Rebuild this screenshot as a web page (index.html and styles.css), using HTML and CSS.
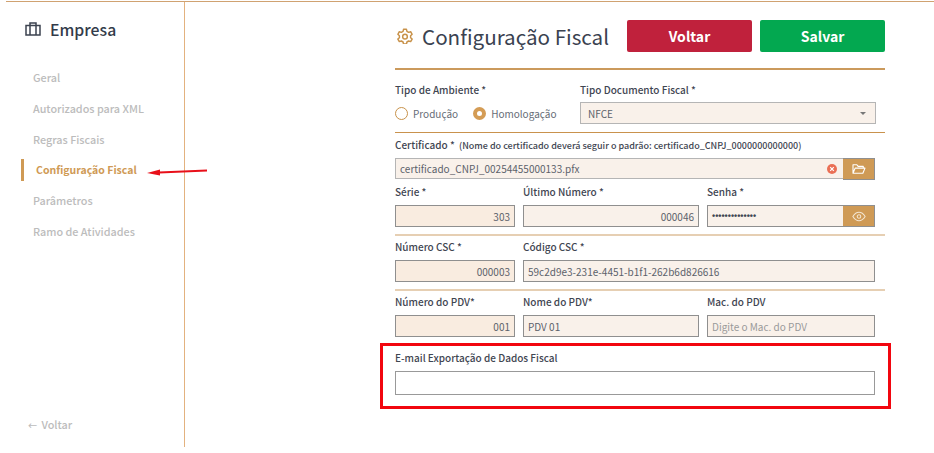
FILE: index.html
```html
<!DOCTYPE html>
<html lang="pt-BR">
<head>
<meta charset="UTF-8">
<title>Configuração Fiscal</title>
<link rel="stylesheet" href="styles.css">
</head>
<body>
<div class="page">
	<aside class="sidebar">
		<h2 class="side-title">
			<svg class="side-icon" viewBox="0 0 16 14" width="16" height="14">
				<path d="M1 3.500h14V13H1zM5 13V1h6v12" fill="none" stroke="#3d4350" stroke-width="1.500"/>
			</svg>
			Empresa
		</h2>
		<ul class="side-nav">
			<li>Geral</li>
			<li>Autorizados para XML</li>
			<li>Regras Fiscais</li>
			<li class="ac">Configuração Fiscal</li>
			<li>Parâmetros</li>
			<li>Ramo de Atividades</li>
		</ul>
		<a class="side-back"><span class="back-arrow">←</span> Voltar</a>
	</aside>

	<main class="main">
		<div class="head">
			<h1 class="title">
				<svg class="title-icon" viewBox="0 0 24 24" width="16" height="16">
					<path d="M9.800 2h4.400l.7 3 2.600 1.500 3-.9 2.200 3.800-2.300 2.100v3l2.300 2.100-2.200 3.800-3-.9-2.600 1.500-.7 3H9.800l-.7-3-2.600-1.500-3 .9L1.300 16.600l2.300-2.100v-3L1.300 9.400l2.200-3.800 3 .9L9.100 5z" fill="none" stroke="#c8924a" stroke-width="2.200" stroke-linejoin="round"/>
					<circle cx="12" cy="13" r="3.500" fill="none" stroke="#c8924a" stroke-width="2.200"/>
				</svg>
				Configuração Fiscal
			</h1>
			<a class="btn btn-red">Voltar</a>
			<a class="btn btn-green">Salvar</a>
		</div>
		<hr class="line">

		<div class="row row-env">
			<div>
				<label class="lbl">Tipo de Ambiente *</label>
				<div class="radios">
					<span class="radio"><i class="dot"></i>Produção</span>
					<span class="radio"><i class="dot on"></i>Homologação</span>
				</div>
			</div>
			<div>
				<label class="lbl">Tipo Documento Fiscal *</label>
				<div class="field select">NFCE<i class="caret"></i></div>
			</div>
		</div>
		<hr class="line thin">

		<div class="row-cert">
			<label class="lbl">Certificado * <small>(Nome do certificado deverá seguir o padrão: certificado_CNPJ_0000000000000)</small></label>
			<div class="group">
				<div class="field grow cert">certificado_CNPJ_00254455000133.pfx
					<svg class="clear" viewBox="0 0 10 10" width="10" height="10">
						<circle cx="5" cy="5" r="5" fill="#ea6f55"/>
						<path d="M3.200 3.200l3.600 3.600M6.800 3.200L3.200 6.800" stroke="#fff" stroke-width="1.200"/>
					</svg>
				</div>
				<a class="addon cert">
					<svg viewBox="0 0 16 14" width="14" height="12">
						<path d="M1 12V2h4.500l1.500 2h6v2M1 12l2.500-6H15l-2.500 6z" fill="none" stroke="#fff" stroke-width="1.300" stroke-linejoin="round"/>
					</svg>
				</a>
			</div>
		</div>
		<div class="row row-serie">
			<div>
				<label class="lbl">Série *</label>
				<div class="field num">303</div>
			</div>
			<div>
				<label class="lbl">Último Número *</label>
				<div class="field num">000046</div>
			</div>
			<div>
				<label class="lbl">Senha *</label>
				<div class="group">
					<div class="field grow pass">••••••••••••••</div>
					<a class="addon">
						<svg viewBox="0 0 16 12" width="14" height="11">
							<path d="M1 6c2-3.200 4.200-4.800 7-4.800S13 2.800 15 6c-2 3.200-4.200 4.800-7 4.800S3 9.200 1 6z" fill="none" stroke="#f3e6d3" stroke-width="1.200"/>
							<circle cx="8" cy="6" r="2" fill="none" stroke="#f3e6d3" stroke-width="1.200"/>
						</svg>
					</a>
				</div>
			</div>
		</div>
		<hr class="line soft">

		<div class="row row-csc">
			<div>
				<label class="lbl">Número CSC *</label>
				<div class="field num">000003</div>
			</div>
			<div>
				<label class="lbl">Código CSC *</label>
				<div class="field">59c2d9e3-231e-4451-b1f1-262b6d826616</div>
			</div>
		</div>
		<hr class="line soft">

		<div class="row row-serie">
			<div>
				<label class="lbl">Número do PDV*</label>
				<div class="field num">001</div>
			</div>
			<div>
				<label class="lbl">Nome do PDV*</label>
				<div class="field">PDV 01</div>
			</div>
			<div>
				<label class="lbl">Mac. do PDV</label>
				<div class="field holder">Digite o Mac. do PDV</div>
			</div>
		</div>

		<div class="mark-box">
			<label class="lbl">E-mail Exportação de Dados Fiscal</label>
			<div class="field blank"></div>
		</div>
	</main>

	<svg class="arrow" viewBox="0 0 64 10" width="64" height="10">
		<path d="M62 3.500L14 5.500" stroke="#e8101a" stroke-width="1.800"/>
		<path d="M2 6l13-3.500v6z" fill="#e8101a"/>
	</svg>
</div>
</body>
</html>
```

FILE: styles.css
```css
* {
	box-sizing: border-box;
}
body {
	margin: 0;
	background: #fff;
	color: #3f4652;
	font-family: "Noto Sans CJK SC", "Noto Sans", sans-serif;
	font-size: 10px;
}
.page {
	position: relative;
	display: flex;
	width: 928px;
	height: 453px;
	margin-left: 6px;
	padding-top: 1px;
	overflow: hidden;
}
.page::before {
	content: "";
	position: absolute;
	top: 1px;
	left: 0;
	right: 0;
	height: 1px;
	background: #d0a271;
}

/* sidebar */
.sidebar {
	display: flex;
	flex-direction: column;
	width: 179px;
	height: 446px;
	padding: 18px 0 15px 15px;
	border-right: 1px solid #e3b27f;
}
.side-title {
	display: flex;
	align-items: center;
	gap: 9px;
	height: 20px;
	margin: 0 0 23px 4px;
	font-size: 15.800px;
	font-weight: 500;
	color: #333b4a;
}
.side-nav {
	margin: 0;
	padding: 0;
	list-style: none;
}
.side-nav li {
	height: 30.800px;
	padding-left: 12px;
	line-height: 30px;
	font-size: 10.800px;
	font-weight: 500;
	color: #bcbcbc;
}
.side-nav li.ac {
	height: 22px;
	margin: 5px 0 4px;
	padding-left: 12px;
	line-height: 22px;
	border-left: 3px solid #cf9a55;
	font-size: 10.500px;
	font-weight: 700;
	color: #cf9a55;
}
.side-back {
	margin-top: auto;
	padding-left: 7px;
	font-size: 10.800px;
	font-weight: 500;
	color: #bcbcbc;
}
.back-arrow {
	margin-right: 2px;
	font-size: 9px;
}

/* main */
.main {
	width: 490px;
	margin-left: 210px;
}
.head {
	display: flex;
	align-items: center;
	gap: 8px;
	height: 32px;
	margin-top: 19px;
}
.title {
	display: flex;
	align-items: center;
	gap: 9px;
	flex: 1;
	margin: 0 0 0 2px;
	white-space: nowrap;
	font-size: 20.600px;
	font-weight: 400;
	color: #3a4250;
}
.btn {
	width: 125px;
	height: 32px;
	line-height: 32px;
	border-radius: 2px;
	text-align: center;
	font-size: 14px;
	font-weight: 700;
	color: #fff;
}
.btn-red {
	background: #c0213c;
}
.btn-green {
	background: #03a850;
}
.line {
	height: 2px;
	margin: 16px 0 0;
	border: 0;
	background: #cb9a5c;
}
.line.thin {
	height: 1px;
	margin: 8px 0 0;
	background: #c9924d;
}
.line.soft {
	margin: 7px 0 0;
	background: #e6cfb3;
}
.lbl {
	display: block;
	height: 14px;
	margin-bottom: 5px;
	line-height: 12px;
	font-size: 10px;
	font-weight: 500;
	color: #3f4652;
}
.lbl small {
	margin-left: 2px;
	font-size: 9px;
}
.row {
	display: grid;
	gap: 8px;
	margin-right: 10px;
	padding-top: 5px;
}
.row-env {
	grid-template-columns: 177px 296px;
	margin-right: 9px;
	padding-top: 13px;
}
.row-env .lbl {
	line-height: 14px;
}
.row-serie {
	grid-template-columns: 120px 176px 168px;
}
.row-csc {
	grid-template-columns: 120px 352px;
}
.row-cert {
	margin-right: 10px;
	padding-top: 6px;
}
.row-cert + .row {
	padding-top: 6px;
}
.radios {
	display: flex;
	gap: 15px;
	height: 22px;
	align-items: center;
}
.radio {
	display: flex;
	align-items: center;
	gap: 5px;
	color: #666c76;
	font-size: 10px;
}
.dot {
	width: 13px;
	height: 13px;
	border: 1px solid #c8924a;
	border-radius: 50%;
}
.dot.on {
	border: 4px solid #d49c55;
	background: #fff;
}
.field {
	display: flex;
	align-items: center;
	height: 22px;
	padding: 0 4px;
	border: 1px solid #8f8f8f;
	background: #f9f1ea;
	font-size: 10px;
	color: #5c626b;
}
.field.num {
	justify-content: flex-end;
	background: #f9ece0;
}
.row-serie > div:nth-child(2) .num {
	background: #f9f1ea;
}
.field.holder {
	color: #9a9a9a;
}
.field.blank {
	height: 24px;
	background: #fff;
	border-color: #999;
}
.select {
	position: relative;
	padding-left: 7px;
	border-color: #b5b5b5;
}
.caret {
	position: absolute;
	right: 9px;
	top: 9px;
	border: 3px solid transparent;
	border-top: 3px solid #777;
}
.group {
	display: flex;
}
.grow {
	flex: 1;
	min-width: 0;
	border-right: 0;
}
.cert {
	height: 21px;
	border-color: #b5b5b5;
}
.pass {
	padding-left: 4px;
	color: #3f4652;
	font-family: "Liberation Sans", sans-serif;
	font-size: 9px;
	font-weight: 700;
}
.clear {
	margin-left: auto;
	margin-right: 2px;
}
.addon {
	display: flex;
	align-items: center;
	justify-content: center;
	width: 32px;
	height: 22px;
	border: 1px solid #8f8f8f;
	border-left: 0;
	background: #cf9a55;
}

/* red frame from the annotated screenshot */
.mark-box {
	height: 66px;
	margin: 6px -6px 0 -15px;
	padding: 6px 13px 0 12px;
	border: 3px solid #f2060f;
}
.arrow {
	position: absolute;
	left: 139px;
	top: 167px;
}
```
